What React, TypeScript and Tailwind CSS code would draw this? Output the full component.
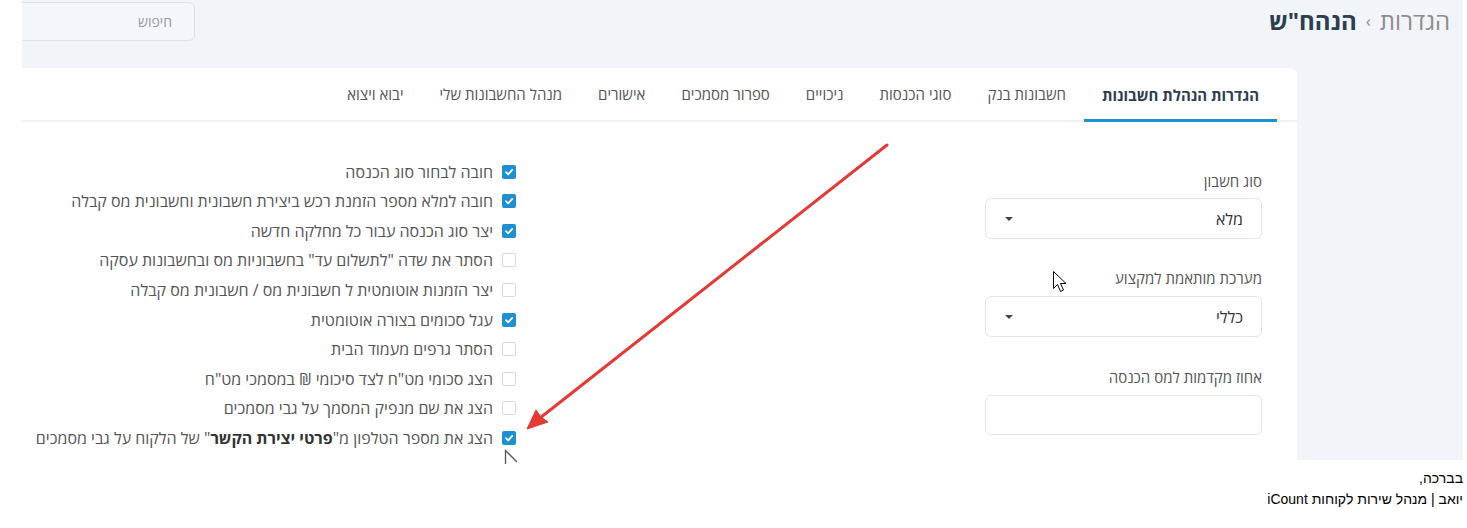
import React from 'react'

const tabs = [
  'הגדרות הנהלת חשבונות',
  'חשבונות בנק',
  'סוגי הכנסות',
  'ניכויים',
  'ספרור מסמכים',
  'אישורים',
  'מנהל החשבונות שלי',
  'יבוא ויצוא',
]

const options: { label: React.ReactNode; checked: boolean }[] = [
  { label: 'חובה לבחור סוג הכנסה', checked: true },
  { label: 'חובה למלא מספר הזמנת רכש ביצירת חשבונית וחשבונית מס קבלה', checked: true },
  { label: 'יצר סוג הכנסה עבור כל מחלקה חדשה', checked: true },
  { label: 'הסתר את שדה "לתשלום עד" בחשבוניות מס ובחשבונות עסקה', checked: false },
  { label: 'יצר הזמנות אוטומטית ל חשבונית מס / חשבונית מס קבלה', checked: false },
  { label: 'עגל סכומים בצורה אוטומטית', checked: true },
  { label: 'הסתר גרפים מעמוד הבית', checked: false },
  { label: 'הצג סכומי מט"ח לצד סיכומי ₪ במסמכי מט"ח', checked: false },
  { label: 'הצג את שם מנפיק המסמך על גבי מסמכים', checked: false },
  {
    label: (
      <>
        הצג את מספר הטלפון מ"<span className="font-bold text-[#333]">פרטי יצירת הקשר</span>" של
        הלקוח על גבי מסמכים
      </>
    ),
    checked: true,
  },
]

function Checkbox({ checked }: { checked: boolean }) {
  if (!checked) {
    return <span className="block h-[14px] w-[14px] shrink-0 rounded-[2px] border border-[#d3dae2] bg-white" />
  }
  return (
    <span className="flex h-[14px] w-[14px] shrink-0 items-center justify-center rounded-[2px] bg-[#1d8fd2]">
      <svg width="10" height="10" viewBox="0 0 10 10">
        <path d="M2 5.2 L4.2 7.3 L8.2 2.9" fill="none" stroke="white" strokeWidth="1.8" strokeLinecap="round" strokeLinejoin="round" />
      </svg>
    </span>
  )
}

function Select({ value }: { value: string }) {
  return (
    <div className="flex h-[41px] items-center justify-between rounded-md border border-[#dfe5ec] bg-white pl-[19px] pr-[18px]">
      <span className="text-[16px] text-[#333]">{value}</span>
      <span className="h-0 w-0 border-x-[4px] border-t-[4px] border-x-transparent border-t-[#444]" />
    </div>
  )
}

export default function App() {
  return (
    <div
      dir="rtl"
      className="relative h-[528px] w-[1467px] overflow-hidden bg-white font-['Open_Sans','Liberation_Sans',sans-serif]"
    >
      <div className="ml-[22px] mr-[4px] flex h-[460px] flex-col overflow-hidden bg-[#f1f4f9]">
        {/* header */}
        <div className="flex h-[68px] shrink-0 items-start justify-between pr-[13px]">
          <div className="mt-[6px] flex items-center gap-[9px] text-[24px] leading-[30px]">
            <span className="text-[#8c8c8c]">הגדרות</span>
            <span className="text-[17px] text-[#8c8c8c]">›</span>
            <span className="font-bold text-[#2c3e50]">הנהח"ש</span>
          </div>
          <div className="ml-[-67px] mt-[2px] flex h-[39px] w-[240px] items-center rounded-md border border-[#dce2e9] bg-[#f3f6fa] pr-[22px] text-[14px] text-[#999]">
            חיפוש
          </div>
        </div>

        {/* card */}
        <div className="mr-[166px] flex flex-1 flex-col rounded-tr-md bg-white">
          <nav className="flex h-[54px] shrink-0 items-stretch border-b-2 border-[#eef1f5] pr-[20px]">
            {tabs.map((t, i) => (
              <div
                key={t}
                className={
                  i === 0
                    ? 'mb-[-2px] flex items-center border-b-[3px] border-[#1d8fd2] px-[18px] pt-[3px] text-[15px] font-bold text-[#2c3e50]'
                    : 'flex items-center px-[18px] text-[15px] text-[#555]'
                }
              >
                {t}
              </div>
            ))}
          </nav>

          <div className="flex gap-[469px] pr-[35px]">
            {/* form column */}
            <div className="w-[277px] shrink-0 pt-[49px]">
              <div className="mb-[7px] text-[15px] leading-[20px] text-[#555]">סוג חשבון</div>
              <Select value="מלא" />
              <div className="mb-[8px] mt-[29px] text-[15px] leading-[20px] text-[#555]">מערכת מותאמת למקצוע</div>
              <Select value="כללי" />
              <div className="mb-[8px] mt-[30px] text-[15px] leading-[20px] text-[#555]">אחוז מקדמות למס הכנסה</div>
              <div className="h-[40px] rounded-md border border-[#dfe5ec] bg-white" />
            </div>

            {/* options */}
            <div className="flex flex-col pt-[35px]">
              {options.map((o, i) => (
                <div key={i} className="flex h-[29.55px] items-center gap-[9px] whitespace-nowrap text-[16px] text-[#555]">
                  <Checkbox checked={o.checked} />
                  <span>{o.label}</span>
                </div>
              ))}
            </div>
          </div>
        </div>
      </div>

      {/* signature */}
      <div className="mr-[4px] mt-[8px] font-['Liberation_Sans',sans-serif] text-[14px] leading-[21px] text-black">
        <div>בברכה,</div>
        <div>יואב | מנהל שירות לקוחות iCount</div>
      </div>

      {/* annotation arrow and cursors */}
      <svg className="pointer-events-none absolute left-0 top-0" width="1467" height="528">
        <line x1="887" y1="145" x2="540" y2="418" stroke="#e53935" strokeWidth="3" strokeLinecap="round" />
        <path d="M527 429 L536 410 L541 417 L548 422 Z" fill="#e53935" stroke="#e53935" strokeWidth="1" strokeLinejoin="round" />
        <path
          d="M1053.5 271.5 L1053.5 288.5 L1057.5 284.5 L1060.5 291.5 L1063.5 290 L1060.5 283.5 L1066 283.5 Z"
          fill="white"
          stroke="black"
          strokeWidth="1"
          strokeLinejoin="round"
        />
        <path d="M505.5 464 L505.5 450.5 L517 462" fill="none" stroke="#555" strokeWidth="1.3" />
      </svg>
    </div>
  )
}
